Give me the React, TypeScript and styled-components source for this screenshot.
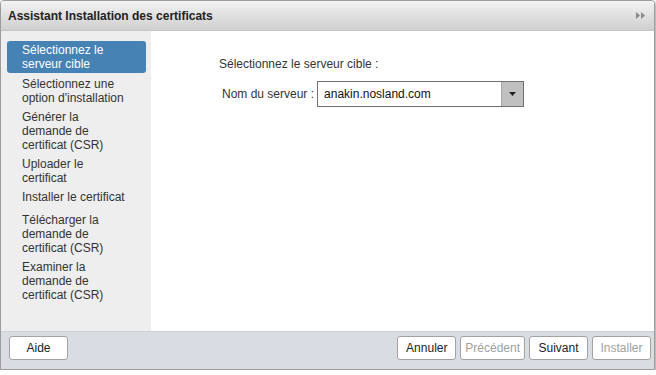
import styled, { createGlobalStyle } from "styled-components"

const GlobalStyle = createGlobalStyle`
  html, body {
    margin: 0;
    padding: 0;
    background: #ffffff;
  }
  body {
    font-family: "Liberation Sans", Arial, sans-serif;
  }
`

const Dialog = styled.div`
  box-sizing: border-box;
  width: 655px;
  height: 370px;
  display: flex;
  flex-direction: column;
  border: 1px solid #9c9c9c;
  border-radius: 4px 4px 0 0;
  background: #fff;
  box-shadow: 1px 2px 4px rgba(0, 0, 0, 0.45);
  overflow: hidden;
`

const Header = styled.div`
  height: 29px;
  flex: none;
  display: flex;
  align-items: center;
  justify-content: space-between;
  padding: 0 9px 0 7px;
  background: linear-gradient(to bottom, #f3f3f3 0%, #e2e2e2 45%, #cfcfcf 100%);
  border-bottom: 1px solid #c4c4c4;
`

const Title = styled.div`
  font-size: 12px;
  font-weight: bold;
  color: #222;
`

const Body = styled.div`
  height: 300px;
  flex: none;
  display: flex;
`

const Sidebar = styled.ul`
  width: 150px;
  flex: none;
  margin: 0;
  padding: 10px 0 0 0;
  list-style: none;
  background: #eeeeee;
`

const Step = styled.li<{ $active?: boolean; $spaced?: boolean }>`
  margin: 0 5px ${(p) => (p.$spaced ? "5px" : p.$active ? "2px" : "1px")} 6px;
  padding: 2px 18px 2px 15px;
  font-size: 12px;
  line-height: 14px;
  border-radius: 3px;
  color: ${(p) => (p.$active ? "#ffffff" : "#333333")};
  background: ${(p) => (p.$active ? "#4682b4" : "transparent")};
`

const Content = styled.div`
  flex: 1;
  padding: 26px 0 0 68px;
  font-size: 12px;
  color: #333;
`

const Lead = styled.div`
  line-height: 14px;
`

const Field = styled.div`
  display: flex;
  align-items: center;
  gap: 3px;
  margin-top: 10px;
  padding-left: 3px;
`

const Select = styled.div`
  box-sizing: border-box;
  width: 207px;
  height: 26px;
  display: flex;
  border: 1px solid #707070;
  background: #fff;
`

const SelectValue = styled.div`
  flex: 1;
  display: flex;
  align-items: center;
  padding-left: 6px;
  font-size: 12px;
  color: #111;
`

const SelectButton = styled.div`
  width: 21px;
  display: flex;
  align-items: center;
  justify-content: center;
  background: #c0c0c0;
  border-left: 1px solid #a8a8a8;
`

const Footer = styled.div`
  height: 37px;
  flex: none;
  display: flex;
  justify-content: space-between;
  align-items: flex-start;
  padding: 4px 3px 0 8px;
  box-sizing: content-box;
  background: #d9dde3;
  border-top: 1px solid #cdd1d7;
`

const Group = styled.div`
  display: flex;
  gap: 4px;
`

const Button = styled.button<{ $disabled?: boolean }>`
  box-sizing: border-box;
  height: 24px;
  min-width: 59px;
  padding: 0 4px;
  border: 1px solid #a2a2a2;
  border-radius: 3px;
  background: #ffffff;
  font-family: "Liberation Sans", Arial, sans-serif;
  font-size: 12px;
  color: ${(p) => (p.$disabled ? "#a0a0a0" : "#222222")};
`

const steps = [
  "Sélectionnez le serveur cible",
  "Sélectionnez une option d'installation",
  "Générer la demande de certificat (CSR)",
  "Uploader le certificat",
  "Installer le certificat",
  "Télécharger la demande de certificat (CSR)",
  "Examiner la demande de certificat (CSR)",
]

const App = () => {
  return (
    <>
      <GlobalStyle />
      <Dialog>
        <Header>
          <Title>Assistant Installation des certificats</Title>
          <svg width="9" height="7" viewBox="0 0 9 7">
            <path d="M0 0 L4 3.5 L0 7 Z M5 0 L9 3.5 L5 7 Z" fill="#8a8a8a" />
          </svg>
        </Header>
        <Body>
          <Sidebar>
            {steps.map((s, i) => (
              <Step key={s} $active={i === 0} $spaced={i === 4}>
                {s}
              </Step>
            ))}
          </Sidebar>
          <Content>
            <Lead>Sélectionnez le serveur cible :</Lead>
            <Field>
              <span>Nom du serveur :</span>
              <Select>
                <SelectValue>anakin.nosland.com</SelectValue>
                <SelectButton>
                  <svg width="7" height="4" viewBox="0 0 7 4">
                    <path d="M0 0 L7 0 L3.5 4 Z" fill="#222" />
                  </svg>
                </SelectButton>
              </Select>
            </Field>
          </Content>
        </Body>
        <Footer>
          <Button>Aide</Button>
          <Group>
            <Button>Annuler</Button>
            <Button $disabled>Précédent</Button>
            <Button>Suivant</Button>
            <Button $disabled>Installer</Button>
          </Group>
        </Footer>
      </Dialog>
    </>
  )
}

export default App
